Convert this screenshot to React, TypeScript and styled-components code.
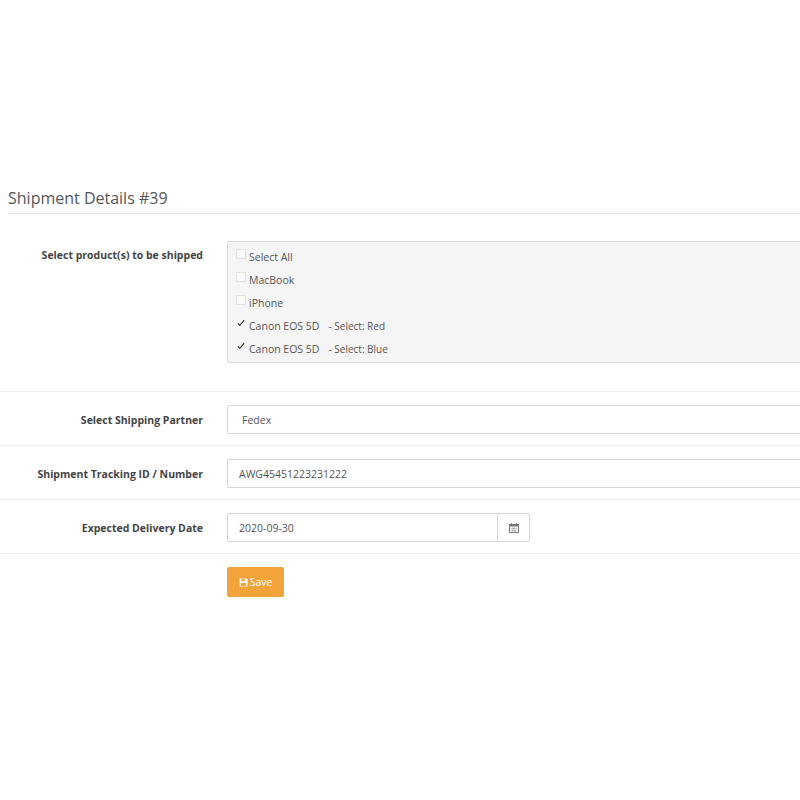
import React from 'react';
import styled, { createGlobalStyle } from 'styled-components';

const GlobalStyle = createGlobalStyle`
  body {
    margin: 0;
    background: #ffffff;
    font-family: "Open Sans", "Liberation Sans", sans-serif;
    color: #555;
    overflow: hidden;
  }
`;

const Page = styled.main`
  width: 800px;
  height: 800px;
  padding-top: 187px;
  box-sizing: border-box;
  overflow: hidden;
`;

const Heading = styled.h1`
  margin: 0 0 0 8px;
  padding-bottom: 4px;
  font-size: 16px;
  font-weight: 400;
  color: #555;
  border-bottom: 1px solid #e6e6e6;
`;

const Form = styled.form`
  margin-top: 14px;
`;

const Row = styled.div<{ $last?: boolean }>`
  display: flex;
  align-items: ${({ $last }) => ($last ? 'flex-start' : 'center')};
  padding: 13px 0 11px;
  border-bottom: ${({ $last }) => ($last ? 'none' : '1px solid #eeeeee')};
`;

const Label = styled.label<{ $top?: boolean }>`
  width: 203px;
  flex-shrink: 0;
  text-align: right;
  font-size: 10.5px;
  font-weight: 700;
  color: #444;
  align-self: ${({ $top }) => ($top ? 'flex-start' : 'center')};
  padding-top: ${({ $top }) => ($top ? '7px' : '0')};
`;

const Control = styled.div`
  margin-left: 24px;
  flex-shrink: 0;
`;

const ProductBox = styled.div`
  width: 600px;
  box-sizing: border-box;
  background: #f5f5f5;
  border: 1px solid #dcdcdc;
  border-radius: 2px;
  padding: 3px 8px 2px;
  margin-bottom: 17px;
`;

const Item = styled.div`
  display: flex;
  align-items: center;
  height: 23px;
  font-size: 10.5px;
  color: #555;
`;

const Box = styled.span<{ $checked?: boolean }>`
  width: 10px;
  height: 10px;
  margin-right: 3px;
  margin-top: -6px;
  box-sizing: border-box;
  border: 1px solid ${({ $checked }) => ($checked ? 'transparent' : '#e2e2e2')};
  background: ${({ $checked }) => ($checked ? 'transparent' : '#fafafa')};
  display: flex;
  align-items: center;
  justify-content: center;
`;

const Variant = styled.span`
  margin-left: 9px;
  font-size: 10px;
`;

const Input = styled.div<{ $width?: number; $pad?: number }>`
  width: ${({ $width }) => $width ?? 600}px;
  height: 29px;
  box-sizing: border-box;
  border: 1px solid #d6d6d6;
  border-radius: 2px;
  padding-left: ${({ $pad }) => $pad ?? 11}px;
  display: flex;
  align-items: center;
  font-size: 10.5px;
  color: #555;
  background: #fff;
`;

const Group = styled.div`
  display: flex;
`;

const Addon = styled.div`
  width: 32px;
  height: 29px;
  box-sizing: border-box;
  border: 1px solid #d6d6d6;
  border-left: none;
  border-radius: 0 2px 2px 0;
  display: flex;
  align-items: center;
  justify-content: center;
`;

const SaveButton = styled.button`
  height: 30px;
  width: 57px;
  border: none;
  border-radius: 2px;
  background: #f2a43a;
  color: #fff;
  font-family: inherit;
  font-size: 10.5px;
  display: flex;
  align-items: center;
  justify-content: center;
  gap: 2px;
`;

const Check = () => (
  <svg width="10" height="10" viewBox="0 0 10 10">
    <path d="M1 5.5 L3.5 8 L9 1.5" fill="none" stroke="#333" strokeWidth="1.3" />
  </svg>
);

const products = [
  { name: 'Select All', checked: false },
  { name: 'MacBook', checked: false },
  { name: 'iPhone', checked: false },
  { name: 'Canon EOS 5D', variant: '- Select: Red', checked: true },
  { name: 'Canon EOS 5D', variant: '- Select: Blue', checked: true },
];

const App: React.FC = () => (
  <Page>
    <GlobalStyle />
    <Heading>Shipment Details #39</Heading>
    <Form>
      <Row>
        <Label $top>Select product(s) to be shipped</Label>
        <Control>
          <ProductBox>
            {products.map((p, i) => (
              <Item key={i}>
                <Box $checked={p.checked}>{p.checked && <Check />}</Box>
                {p.name}
                {p.variant && <Variant>{p.variant}</Variant>}
              </Item>
            ))}
          </ProductBox>
        </Control>
      </Row>
      <Row>
        <Label>Select Shipping Partner</Label>
        <Control>
          <Input $pad={14}>Fedex</Input>
        </Control>
      </Row>
      <Row>
        <Label>Shipment Tracking ID / Number</Label>
        <Control>
          <Input>AWG45451223231222</Input>
        </Control>
      </Row>
      <Row>
        <Label>Expected Delivery Date</Label>
        <Control>
          <Group>
            <Input $width={271} style={{ borderRadius: '2px 0 0 2px' }}>2020-09-30</Input>
            <Addon>
              <svg width="10" height="10" viewBox="0 0 10 10">
                <rect x="0.5" y="1.5" width="9" height="8" fill="none" stroke="#777" />
                <rect x="0.5" y="1.5" width="9" height="2" fill="#777" />
                <rect x="2" y="0" width="1" height="2" fill="#777" />
                <rect x="7" y="0" width="1" height="2" fill="#777" />
                <path d="M2 5.5h6M2 7.5h6M4 4v5M6 4v5" stroke="#999" strokeWidth="0.6" />
              </svg>
            </Addon>
          </Group>
        </Control>
      </Row>
      <Row $last>
        <Label />
        <Control>
          <SaveButton type="button">
            <svg width="9" height="9" viewBox="0 0 10 10">
              <path d="M0.5 0.5h7.5l1.5 1.5v7.5h-9z" fill="#fff" />
              <rect x="2.5" y="1" width="4" height="2.5" fill="#f2a43a" />
              <rect x="2" y="5.5" width="6" height="3.5" fill="#f2a43a" />
            </svg>
            Save
          </SaveButton>
        </Control>
      </Row>
    </Form>
  </Page>
);

export default App;
